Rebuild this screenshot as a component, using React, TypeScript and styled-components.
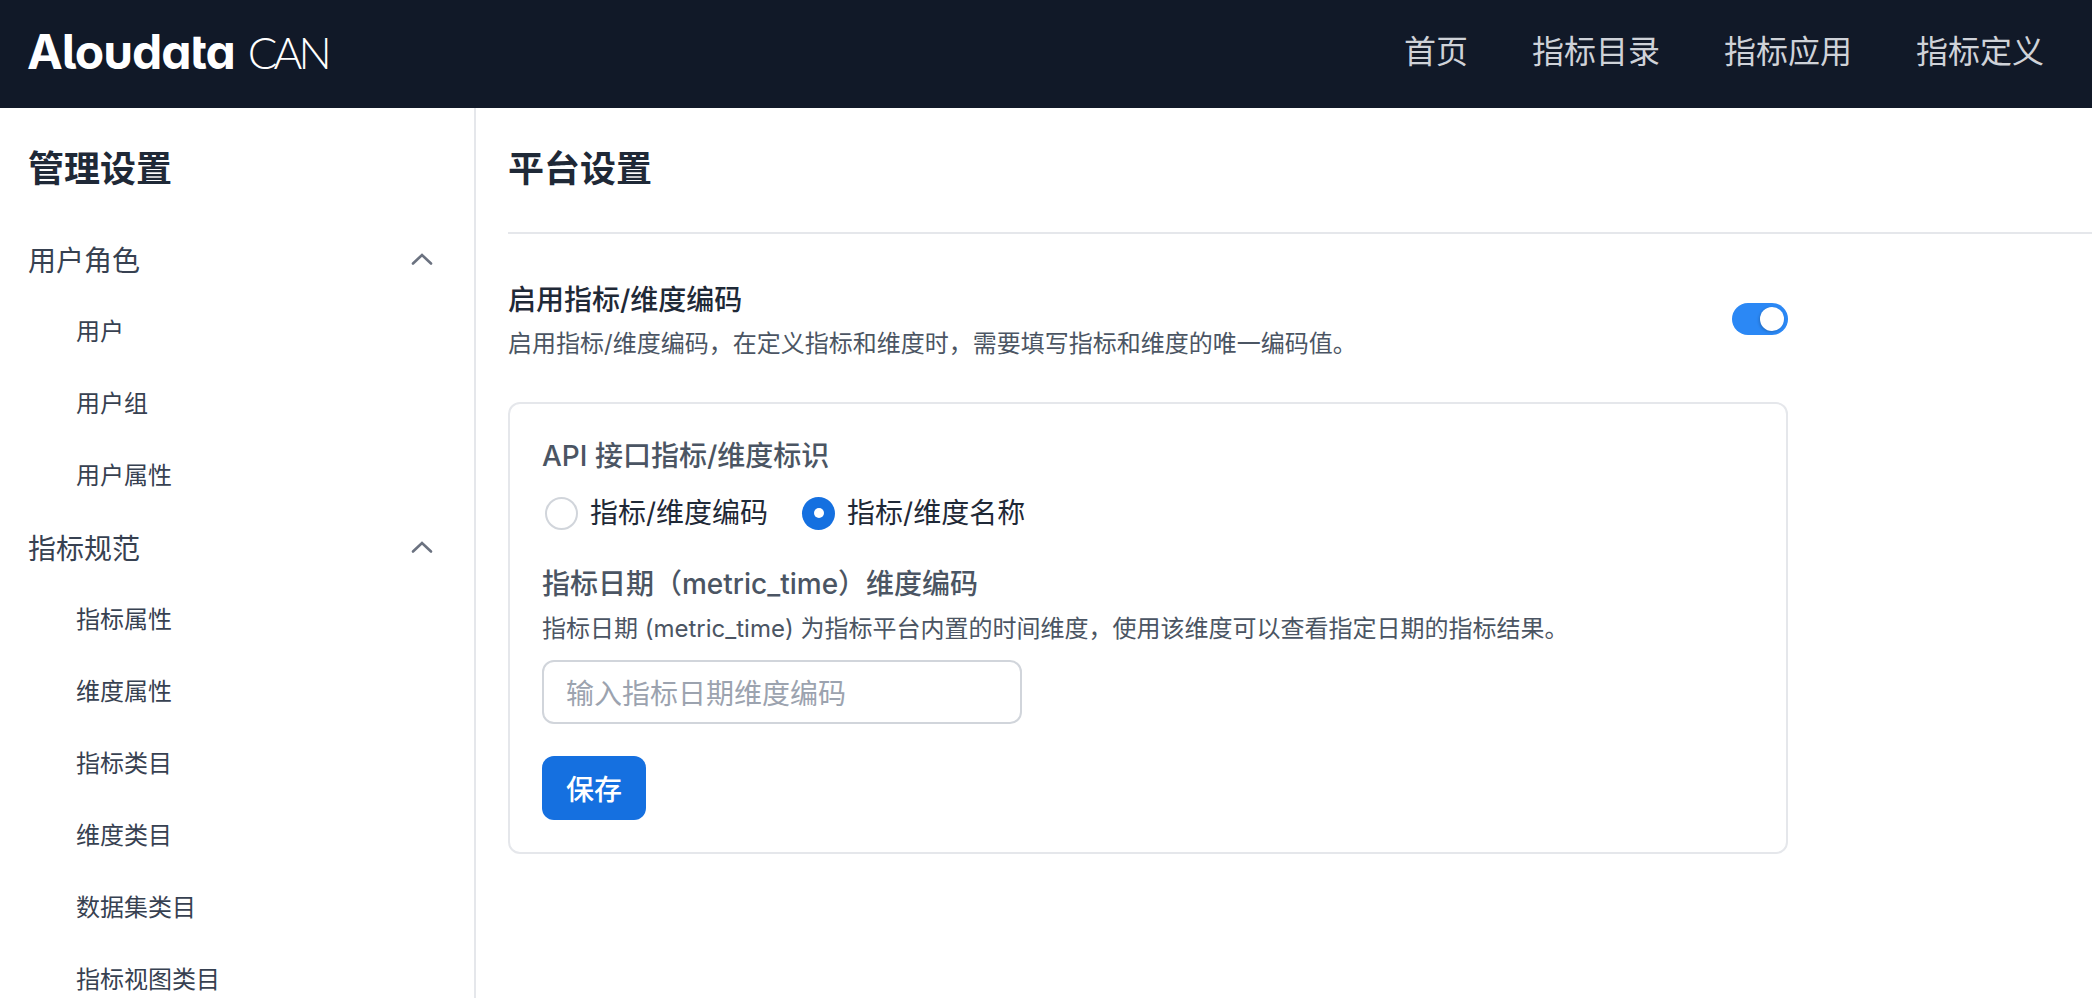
import React from "react";
import styled, { createGlobalStyle } from "styled-components";

const Global = createGlobalStyle`
  html, body { margin: 0; padding: 0; height: 100%; overflow: hidden; background: #fff; }
  * { box-sizing: border-box; }
  body { font-family: Inter, "Noto Sans CJK SC", sans-serif; color: #1f2937; }
`;

const Page = styled.div`
  display: flex;
  flex-direction: column;
  height: 998px;
  overflow: hidden;
`;
const TopBar = styled.header`
  flex: none;
  height: 108px;
  background: #111928;
  display: flex;
  align-items: center;
  justify-content: space-between;
  padding: 0 48px 4px 27px;
`;
const Logo = styled.div`
  display: flex;
  align-items: baseline;
  gap: 13px;
  color: #fff;
  white-space: nowrap;
  margin-bottom: 2px;
`;
const LogoName = styled.span`
  font-family: Inter, sans-serif;
  font-size: 48px;
  font-weight: 700;
  letter-spacing: -1px;
  font-feature-settings: "cv11" 1, "ss02" 1, "salt" 1;
`;
const LogoProduct = styled.span`
  font-family: Lato, sans-serif;
  font-size: 44px;
  font-weight: 300;
  letter-spacing: -4px;
`;
const Nav = styled.nav`
  display: flex;
  gap: 64px;
`;
const NavLink = styled.a`
  font-size: 32px;
  line-height: 48px;
  color: #cfd2d8;
`;
const Body = styled.div`
  flex: 1;
  display: flex;
  min-height: 0;
`;
const Sidebar = styled.aside`
  flex: none;
  width: 476px;
  border-right: 2px solid #e5e7eb;
  padding: 33px 0 0 28px;
  overflow: hidden;
`;
const SideTitle = styled.h2`
  margin: 0 0 27px;
  font-size: 36px;
  line-height: 56px;
  font-weight: 700;
  color: #1f2937;
`;
const GroupRow = styled.div`
  display: flex;
  align-items: center;
  justify-content: space-between;
  height: 72px;
  padding: 0 40px 2px 0;
  font-size: 28px;
  color: #374151;
`;
const SubRow = styled.div`
  display: flex;
  align-items: center;
  height: 72px;
  padding: 0 0 6px 48px;
  font-size: 24px;
  color: #374151;
`;
const Main = styled.main`
  flex: 1;
  min-width: 0;
  padding: 33px 0 0 32px;
`;
const PageTitle = styled.h1`
  margin: 0;
  font-size: 36px;
  line-height: 56px;
  font-weight: 700;
  color: #1f2937;
  padding-bottom: 35px;
  border-bottom: 2px solid #e5e7eb;
`;
const Content = styled.div`
  width: 1280px;
  padding-top: 46px;
`;
const SwitchRow = styled.div`
  display: flex;
  align-items: center;
  justify-content: space-between;
`;
const SwitchTitle = styled.div`
  font-size: 28px;
  line-height: 40px;
  font-weight: 500;
  color: #1f2937;
`;
const Hint = styled.div`
  font-size: 24px;
  line-height: 32px;
  color: #4b5563;
  margin-top: 8px;
`;
const Toggle = styled.div`
  position: relative;
  width: 56px;
  height: 32px;
  border-radius: 16px;
  background: #2b88f5;
  margin-bottom: 3px;
`;
const Knob = styled.span`
  position: absolute;
  top: 4px;
  right: 4px;
  width: 24px;
  height: 24px;
  border-radius: 50%;
  background: #fff;
  box-shadow: -1px 1px 3px rgba(0, 0, 0, 0.2);
`;
const Card = styled.section`
  margin-top: 42px;
  border: 2px solid #e5e7eb;
  border-radius: 12px;
  padding: 32px;
`;
const FieldLabel = styled.div`
  font-size: 28px;
  line-height: 40px;
  font-weight: 500;
  color: #4b5563;
`;
const RadioRow = styled.div`
  display: flex;
  gap: 34px;
  margin-top: 13px;
  margin-bottom: 27px;
  padding-left: 3px;
`;
const RadioItem = styled.label`
  display: flex;
  align-items: center;
  gap: 12px;
  font-size: 28px;
  line-height: 48px;
  color: #1f2937;
`;
const RadioDot = styled.span<{ $on?: boolean }>`
  width: 33px;
  height: 33px;
  border-radius: 50%;
  display: flex;
  align-items: center;
  justify-content: center;
  background: ${(p) => (p.$on ? "#1570e0" : "#fff")};
  border: ${(p) => (p.$on ? "none" : "2px solid #d1d5db")};
  &::after {
    content: "";
    display: ${(p) => (p.$on ? "block" : "none")};
    width: 10px;
    height: 10px;
    border-radius: 50%;
    background: #fff;
  }
`;
const FieldHint = styled(Hint)`
  margin-top: 9px;
`;
const TextInput = styled.input`
  display: block;
  width: 480px;
  height: 64px;
  margin-top: 15px;
  padding: 3px 22px 0;
  border: 2px solid #d1d5db;
  border-radius: 12px;
  font: inherit;
  font-size: 28px;
  outline: none;
  &::placeholder { color: #9ca3af; opacity: 1; }
`;
const SaveButton = styled.button`
  display: block;
  width: 104px;
  height: 64px;
  margin-top: 32px;
  border: none;
  border-radius: 12px;
  background: #1570e0;
  color: #fff;
  font: inherit;
  font-size: 28px;
  font-weight: 500;
`;

const Chevron = () => (
  <svg width="24" height="24" viewBox="0 0 24 24" fill="none" stroke="#6b7280" strokeWidth="2.6" strokeLinecap="round" strokeLinejoin="miter" aria-hidden="true">
    <path d="M3 16.5 L12 8 L21 16.5" />
  </svg>
);

const menu = [
  { title: "用户角色", items: ["用户", "用户组", "用户属性"] },
  { title: "指标规范", items: ["指标属性", "维度属性", "指标类目", "维度类目", "数据集类目", "指标视图类目"] },
];

export default function App() {
  return (
    <Page>
      <Global />
      <TopBar>
        <Logo>
          <LogoName>Aloudata</LogoName>
          <LogoProduct>CAN</LogoProduct>
        </Logo>
        <Nav>
          {["首页", "指标目录", "指标应用", "指标定义"].map((n) => (
            <NavLink key={n}>{n}</NavLink>
          ))}
        </Nav>
      </TopBar>
      <Body>
        <Sidebar>
          <SideTitle>管理设置</SideTitle>
          {menu.map((g) => (
            <div key={g.title}>
              <GroupRow>
                {g.title}
                <Chevron />
              </GroupRow>
              {g.items.map((i) => (
                <SubRow key={i}>{i}</SubRow>
              ))}
            </div>
          ))}
        </Sidebar>
        <Main>
          <PageTitle>平台设置</PageTitle>
          <Content>
            <SwitchRow>
              <div>
                <SwitchTitle>启用指标/维度编码</SwitchTitle>
                <Hint>启用指标/维度编码，在定义指标和维度时，需要填写指标和维度的唯一编码值。</Hint>
              </div>
              <Toggle>
                <Knob />
              </Toggle>
            </SwitchRow>
            <Card>
              <FieldLabel>API 接口指标/维度标识</FieldLabel>
              <RadioRow>
                <RadioItem>
                  <RadioDot />
                  指标/维度编码
                </RadioItem>
                <RadioItem>
                  <RadioDot $on />
                  指标/维度名称
                </RadioItem>
              </RadioRow>
              <FieldLabel>指标日期（metric_time）维度编码</FieldLabel>
              <FieldHint>指标日期 (metric_time) 为指标平台内置的时间维度，使用该维度可以查看指定日期的指标结果。</FieldHint>
              <TextInput placeholder="输入指标日期维度编码" />
              <SaveButton>保存</SaveButton>
            </Card>
          </Content>
        </Main>
      </Body>
    </Page>
  );
}
